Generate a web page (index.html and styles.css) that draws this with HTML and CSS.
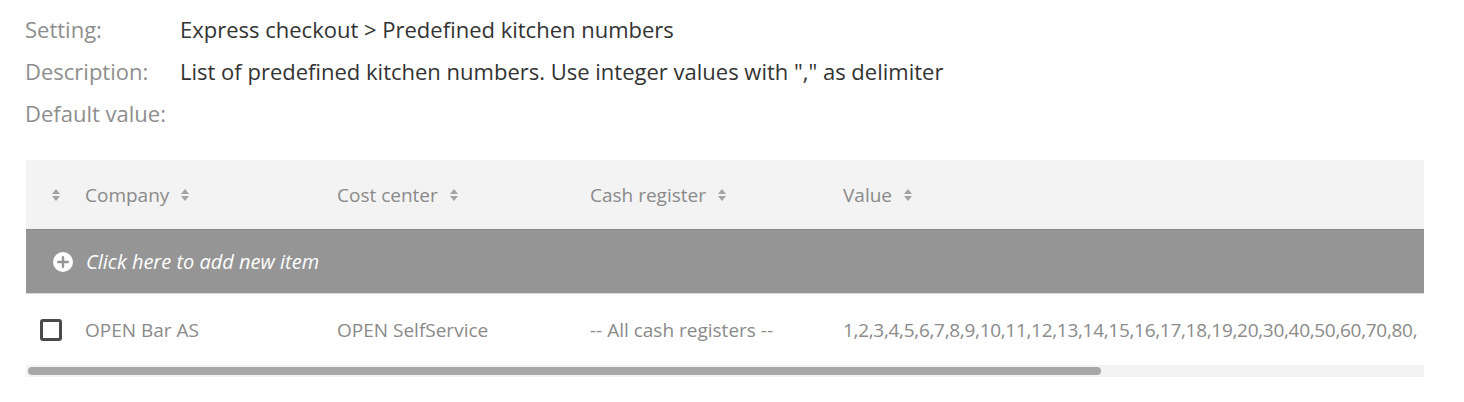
FILE: index.html
```html
<!DOCTYPE html>
<html lang="en">
<head>
<meta charset="utf-8">
<title>Setting</title>
<link rel="stylesheet" href="styles.css">
</head>
<body>
<div class="page">
  <div class="meta">
    <div class="meta-row"><span class="meta-label">Setting:</span><span class="meta-value">Express checkout &gt; Predefined kitchen numbers</span></div>
    <div class="meta-row"><span class="meta-label">Description:</span><span class="meta-value">List of predefined kitchen numbers. Use integer values with "," as delimiter</span></div>
    <div class="meta-row"><span class="meta-label">Default value:</span><span class="meta-value"></span></div>
  </div>

  <div class="grid">
    <div class="grid-viewport">
      <div class="grid-content">
        <div class="grid-row grid-head">
          <div class="cell cell-select"><span class="sort"></span></div>
          <div class="cell">Company <span class="sort"></span></div>
          <div class="cell">Cost center <span class="sort"></span></div>
          <div class="cell">Cash register <span class="sort"></span></div>
          <div class="cell">Value <span class="sort"></span></div>
        </div>
        <div class="add-row">
          <svg class="add-icon" width="20" height="20" viewBox="0 0 20 20" aria-hidden="true">
            <circle cx="10" cy="10" r="10" fill="#ffffff"/>
            <path d="M10 5.2v9.6M5.2 10h9.6" stroke="#959596" stroke-width="2.4" stroke-linecap="round"/>
          </svg>
          <span class="add-text">Click here to add new item</span>
        </div>
        <div class="grid-row grid-data">
          <div class="cell cell-select"><span class="checkbox"></span></div>
          <div class="cell">OPEN Bar AS</div>
          <div class="cell">OPEN SelfService</div>
          <div class="cell">-- All cash registers --</div>
          <div class="cell cell-value">1,2,3,4,5,6,7,8,9,10,11,12,13,14,15,16,17,18,19,20,30,40,50,60,70,80,</div>
        </div>
      </div>
    </div>
    <div class="scrollbar"><div class="scroll-thumb" style="width: 77%"></div></div>
  </div>
</div>
</body>
</html>
```

FILE: styles.css
```css
* { box-sizing: border-box; }

html, body {
  margin: 0;
  padding: 0;
  background: #ffffff;
}

body {
  font-family: "Open Sans", "Noto Sans", sans-serif;
}

.page {
  padding: 8px 40px 0 25px;
}

.meta-row {
  display: flex;
  align-items: center;
  height: 42px;
  font-size: 22px;
}

.meta-label {
  width: 155px;
  color: #8e8e8e;
}

.meta-value {
  color: #333333;
}

.grid {
  margin-top: 26px;
  margin-left: 1px;
  width: 1398px;
}

.grid-viewport {
  overflow: hidden;
}

.grid-content {
  width: 1815px;
}

.grid-row {
  display: grid;
  grid-template-columns: 59px 252px 253px 253px 1fr;
  align-items: center;
  font-size: 19px;
  color: #8a8a8a;
}

.cell {
  white-space: nowrap;
  display: flex;
  align-items: center;
}

.cell-value {
  letter-spacing: -0.3px;
}

.grid-head {
  height: 69px;
  background: #f3f3f3;
}

.grid-head .cell-select {
  padding-left: 26px;
}

.sort {
  display: inline-block;
  position: relative;
  width: 8px;
  height: 12px;
  margin-left: 12px;
}

.cell-select .sort {
  margin-left: 0;
}

.sort::before,
.sort::after {
  content: "";
  position: absolute;
  left: 0;
  border-left: 4px solid transparent;
  border-right: 4px solid transparent;
}

.sort::before {
  top: 0;
  border-bottom: 5px solid #a3a3a3;
}

.sort::after {
  bottom: 0;
  border-top: 5px solid #a3a3a3;
}

.add-row {
  height: 65px;
  background: #959596;
  border-top: 1px solid #8a8a8b;
  border-bottom: 1px solid #d9d9d9;
  display: flex;
  align-items: center;
  padding-left: 27px;
  gap: 13px;
}

.add-icon {
  flex: none;
}

.add-text {
  color: #ffffff;
  font-style: italic;
  font-size: 20px;
}

.grid-data {
  height: 71px;
  background: #ffffff;
}

.grid-data .cell-select {
  padding-left: 14px;
}

.checkbox {
  display: inline-block;
  width: 22px;
  height: 22px;
  border: 3px solid #4a4a4a;
  border-radius: 3px;
}

.scrollbar {
  height: 12px;
  background: #f3f3f3;
  padding: 2px;
}

.scroll-thumb {
  height: 8px;
  background: #a8a8a8;
  border-radius: 4px;
}
```
